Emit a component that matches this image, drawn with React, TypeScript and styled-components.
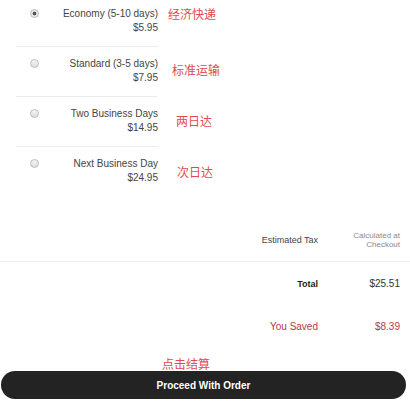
import styled, { createGlobalStyle } from "styled-components";

interface ShippingOption {
  id: string;
  label: string;
  price: string;
  note: string;
  noteX: number;
  noteY: number;
}

const options: ShippingOption[] = [
  { id: "economy", label: "Economy (5-10 days)", price: "$5.95", note: "经济快递", noteX: 10, noteY: 9 },
  { id: "standard", label: "Standard (3-5 days)", price: "$7.95", note: "标准运输", noteX: 14, noteY: 15 },
  { id: "two", label: "Two Business Days", price: "$14.95", note: "两日达", noteX: 18, noteY: 16 },
  { id: "next", label: "Next Business Day", price: "$24.95", note: "次日达", noteX: 19, noteY: 17 },
];

const GlobalStyle = createGlobalStyle`
  body {
    margin: 0;
    background: #fff;
    font-family: "Liberation Sans", Arial, sans-serif;
    overflow: hidden;
  }
`;

const App = () => {
  const selected = "economy";

  return (
    <Page>
      <GlobalStyle />
      <OptionList>
        {options.map((opt, i) => (
          <OptionLine key={opt.id}>
            <Option last={i === options.length - 1}>
              <Radio checked={opt.id === selected} />
              <OptionText>
                <span>{opt.label}</span>
                <span>{opt.price}</span>
              </OptionText>
            </Option>
            <Note x={opt.noteX} y={opt.noteY}>
              {opt.note}
            </Note>
          </OptionLine>
        ))}
      </OptionList>

      <Summary>
        <SummaryRow height={42} divider>
          <Label>Estimated Tax</Label>
          <Muted>
            Calculated at
            <br />
            Checkout
          </Muted>
        </SummaryRow>
        <SummaryRow height={43}>
          <Label bold>Total</Label>
          <Value>$25.51</Value>
        </SummaryRow>
        <SummaryRow height={42}>
          <Label saved>You Saved</Label>
          <Value saved>$8.39</Value>
        </SummaryRow>
      </Summary>

      <CheckoutNote>点击结算</CheckoutNote>
      <ProceedButton>Proceed With Order</ProceedButton>
    </Page>
  );
};

export default App;

const Page = styled.div`
  width: 410px;
  height: 408px;
  overflow: hidden;
`;

const OptionList = styled.div`
  margin-top: -3px;
  padding-left: 16px;
`;

const OptionLine = styled.div`
  display: flex;
  align-items: flex-start;
`;

const Option = styled.div<{ last: boolean }>`
  width: 142px;
  height: 49px;
  box-sizing: content-box;
  display: flex;
  align-items: flex-start;
  border-bottom: ${(p) => (p.last ? "none" : "1px solid #ececec")};
`;

const Radio = styled.span<{ checked: boolean }>`
  flex: none;
  width: 9px;
  height: 9px;
  margin: 12px 0 0 14px;
  box-sizing: border-box;
  border-radius: 50%;
  border: 1px solid #bdbdbd;
  background: ${(p) =>
    p.checked
      ? "radial-gradient(circle, #555 0 1.6px, #e6e6e6 2.2px)"
      : "linear-gradient(#f6f6f6, #dcdcdc)"};
`;

const OptionText = styled.div`
  flex: 1;
  padding-top: 10px;
  display: flex;
  flex-direction: column;
  align-items: flex-end;
  font-size: 10px;
  line-height: 14px;
  color: #444;
`;

const Note = styled.div<{ x: number; y: number }>`
  margin: ${(p) => p.y}px 0 0 ${(p) => p.x}px;
  font-family: "Noto Sans CJK SC", "Liberation Sans", sans-serif;
  font-size: 12px;
  line-height: 15px;
  color: #e24a4f;
`;

const Summary = styled.div`
  margin-top: 23px;
`;

const SummaryRow = styled.div<{ height: number; divider?: boolean }>`
  display: grid;
  grid-template-columns: 1fr 82px;
  align-items: center;
  height: ${(p) => p.height}px;
  padding-right: 10px;
  border-bottom: ${(p) => (p.divider ? "1px solid #ececec" : "none")};
`;

const Label = styled.div<{ bold?: boolean; saved?: boolean }>`
  text-align: right;
  font-size: ${(p) => (p.saved ? 10 : 9)}px;
  font-weight: ${(p) => (p.bold ? 700 : 400)};
  color: ${(p) => (p.saved ? "#b23a44" : p.bold ? "#222" : "#444")};
`;

const Value = styled.div<{ saved?: boolean }>`
  text-align: right;
  font-size: 10px;
  color: ${(p) => (p.saved ? "#b23a44" : "#333")};
`;

const Muted = styled.div`
  text-align: right;
  font-size: 8px;
  line-height: 9px;
  color: #8a8a8a;
`;

const CheckoutNote = styled.div`
  margin-top: 9px;
  padding-left: 162px;
  font-family: "Noto Sans CJK SC", "Liberation Sans", sans-serif;
  font-size: 12px;
  line-height: 15px;
  color: #e24a4f;
`;

const ProceedButton = styled.button`
  display: block;
  width: 405px;
  height: 28px;
  margin-left: 1px;
  border: none;
  border-radius: 14px;
  background: #232323;
  color: #fff;
  font-family: "Liberation Sans", Arial, sans-serif;
  font-size: 10px;
  font-weight: 700;
  cursor: pointer;
`;
